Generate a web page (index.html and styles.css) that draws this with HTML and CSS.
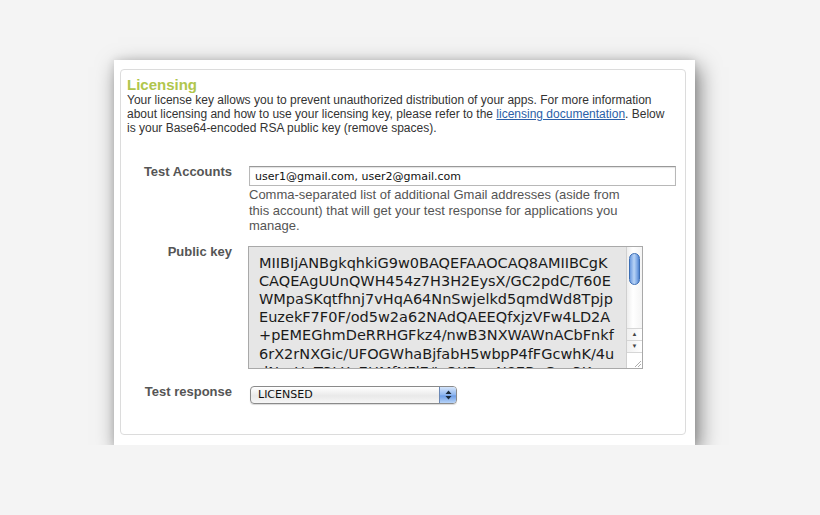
FILE: index.html
```html
<!DOCTYPE html>
<html lang="en">
<head>
    <meta charset="UTF-8">
    <title>Licensing</title>
    <link rel="stylesheet" href="styles.css">
</head>
<body>
    <div class="card">
        <div class="panel">
            <h2 class="panel-title">Licensing</h2>
            <p class="intro">Your license key allows you to prevent unauthorized distribution of your apps. For more information about licensing and how to use your licensing key, please refer to the <a href="#">licensing documentation</a>. Below is your Base64-encoded RSA public key (remove spaces).</p>

            <div class="field">
                <label class="field-label">Test Accounts</label>
                <div class="field-body">
                    <input class="text-input" type="text" value="user1@gmail.com, user2@gmail.com">
                    <p class="hint">Comma-separated list of additional Gmail addresses (aside from this account) that will get your test response for applications you manage.</p>
                </div>
            </div>

            <div class="field field-key">
                <label class="field-label">Public key</label>
                <div class="key-box">
                    <div class="key-text">MIIBIjANBgkqhkiG9w0BAQEFAAOCAQ8AMIIBCgK
CAQEAgUUnQWH454z7H3H2EysX/GC2pdC/T60E
WMpaSKqtfhnj7vHqA64NnSwjelkd5qmdWd8Tpjp
EuzekF7F0F/od5w2a62NAdQAEEQfxjzVFw4LD2A
+pEMEGhmDeRRHGFkz4/nwB3NXWAWnACbFnkf
6rX2rNXGic/UFOGWhaBjfabH5wbpP4fFGcwhK/4u
dNzzUnT3LXy7HMfNFl7/JzQK7mrN87BuC+r3K</div>
                    <div class="scrollbar">
                        <div class="scroll-track"><div class="scroll-thumb"></div></div>
                        <div class="scroll-btn">&#9650;</div>
                        <div class="scroll-btn">&#9660;</div>
                        <div class="scroll-grip">
                            <svg width="9" height="9" viewBox="0 0 9 9"><path d="M8 2L2 8M8 5L5 8" stroke="#999" stroke-width="0.8"/></svg>
                        </div>
                    </div>
                </div>
            </div>

            <div class="field field-response">
                <label class="field-label">Test response</label>
                <div class="select-box">
                    <span class="select-value">LICENSED</span>
                    <span class="select-stepper">
                        <svg width="7" height="10" viewBox="0 0 7 10"><path d="M3.5 0.5L6.5 4H0.5Z M3.5 9.5L6.5 6H0.5Z" fill="#1b2a3a"/></svg>
                    </span>
                </div>
            </div>
        </div>
    </div>
</body>
</html>
```

FILE: styles.css
```css
body {
    margin: 0;
    padding: 60px 0 0 114px;
    background-color: #f4f4f4;
    font-family: "Liberation Sans", Arial, sans-serif;
    color: #333;
}

.card {
    width: 581px;
    box-sizing: border-box;
    padding: 9px 9px 10px 6px;
    background-color: #fff;
    box-shadow: 4px 7px 20px rgba(0, 0, 0, 0.5), 0 0 8px rgba(0, 0, 0, 0.1);
}

.panel {
    border: 1px solid #dcdcdc;
    border-radius: 4px;
    padding: 6px 6px 30px 6px;
}

.panel-title {
    margin: 0;
    font-size: 15px;
    line-height: 17px;
    font-weight: bold;
    color: #b0c64c;
}

.intro {
    margin: 0;
    max-width: 548px;
    font-size: 12px;
    line-height: 14px;
    color: #333;
}

.intro a {
    color: #2b5fa8;
}

.field {
    display: grid;
    grid-template-columns: 105px 1fr;
    column-gap: 17px;
    margin-top: 31px;
}

.field-key {
    margin-top: 12px;
}

.field-response {
    margin-top: 17px;
}

.field-label {
    text-align: right;
    font-size: 13px;
    font-weight: bold;
    line-height: 12px;
    color: #555;
}

.text-input {
    display: block;
    width: 427px;
    height: 20px;
    box-sizing: border-box;
    margin: 0;
    padding: 0 5px;
    border: 1px solid #b8b8b8;
    border-top-color: #999;
    box-shadow: inset 0 1px 1px rgba(0, 0, 0, 0.12);
    font-family: "DejaVu Sans", sans-serif;
    font-size: 11px;
    color: #111;
    background: #fff;
}

.hint {
    margin: 1px 0 0;
    width: 382px;
    font-size: 13px;
    line-height: 15.5px;
    color: #555;
}

.key-box {
    display: flex;
    width: 395px;
    height: 123px;
    box-sizing: border-box;
    margin-left: -1px;
    border: 1px solid #a9a9a9;
    background-color: #e6e6e6;
    overflow: hidden;
}

.key-text {
    flex: 1;
    padding: 7px 0 0 10px;
    white-space: pre;
    font-family: "DejaVu Sans", sans-serif;
    font-size: 14.5px;
    line-height: 18.2px;
    color: #1a1a1a;
    overflow: hidden;
}

.scrollbar {
    width: 15px;
    flex-shrink: 0;
    display: flex;
    flex-direction: column;
    background: #fff;
    border-left: 1px solid #d0d0d0;
}

.scroll-track {
    flex: 1;
    padding: 6px 2px 0;
    background: linear-gradient(to right, #eee, #fff 40%, #f4f4f4);
}

.scroll-thumb {
    height: 30px;
    border-radius: 6px;
    border: 1px solid #3d6fb5;
    background: linear-gradient(to right, #6d9be0, #b9d4f6 45%, #7aa6e4 80%, #4f82cf);
}

.scroll-btn {
    height: 11px;
    font-size: 6px;
    line-height: 11px;
    text-align: center;
    color: #444;
    border-top: 1px solid #d6d6d6;
    background: linear-gradient(to right, #f0f0f0, #fff);
}

.scroll-grip {
    height: 15px;
    display: flex;
    align-items: flex-end;
    justify-content: flex-end;
    border-top: 1px solid #d6d6d6;
    background: #fff;
}

.select-box {
    display: flex;
    width: 207px;
    height: 18px;
    box-sizing: border-box;
    margin-left: 1px;
    border: 1px solid #8a8a8a;
    border-radius: 4px;
    background: linear-gradient(#ffffff, #e9e9e9 55%, #f6f6f6);
    box-shadow: 0 1px 1px rgba(0, 0, 0, 0.15);
    overflow: hidden;
}

.select-value {
    flex: 1;
    padding-left: 7px;
    font-family: "DejaVu Sans", sans-serif;
    font-size: 11px;
    line-height: 16px;
    color: #111;
}

.select-stepper {
    width: 16px;
    display: flex;
    align-items: center;
    justify-content: center;
    border-left: 1px solid #6b88b5;
    background: linear-gradient(to bottom, #d5e5fb, #8db5ee 50%, #6d9de6 55%, #b7d3f7);
}
```
